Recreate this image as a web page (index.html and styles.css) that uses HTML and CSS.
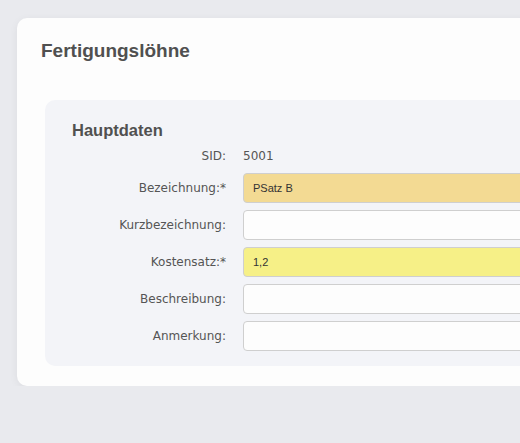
FILE: index.html
```html
<!DOCTYPE html>
<html lang="de">
  <head>
    <meta charset="UTF-8" />
    <title>Fertigungslöhne</title>
    <link rel="stylesheet" href="styles.css">
  </head>
  <body>
    <div class="card">
      <h1>Fertigungslöhne</h1>

      <div class="panel">
        <h2>Hauptdaten</h2>
        <div class="form">
          <label class="label">SID:</label>
          <div class="value">5001</div>

          <label class="label" for="bez">Bezeichnung:*</label>
          <input class="field field-required" id="bez" type="text" value="PSatz B" />

          <label class="label" for="kurz">Kurzbezeichnung:</label>
          <input class="field" id="kurz" type="text" value="" />

          <label class="label" for="kosten">Kostensatz:*</label>
          <input class="field field-changed" id="kosten" type="text" value="1,2" />

          <label class="label" for="beschr">Beschreibung:</label>
          <input class="field" id="beschr" type="text" value="" />

          <label class="label" for="anm">Anmerkung:</label>
          <input class="field" id="anm" type="text" value="" />
        </div>
      </div>
    </div>
  </body>
</html>
```

FILE: styles.css
```css
html, body {
    overflow: hidden;
}

body {
    margin: 0;
    background-color: #e9eaee;
    font-family: 'Liberation Sans', Arial, sans-serif;
}

.card {
    width: 720px;
    margin: 18px 0 0 17px;
    padding: 21px 0 20px 24px;
    background: #fdfdfd;
    border-radius: 10px;
    box-shadow: 0 2px 8px rgba(0, 0, 0, 0.06);
}

h1 {
    margin: 0 0 37px 0;
    font-size: 19px;
    line-height: 24px;
    font-weight: 700;
    color: #505050;
}

.panel {
    margin-left: 4px;
    padding: 20px 0 15px 27px;
    background: #f3f4f8;
    border-radius: 10px;
}

h2 {
    margin: 0 0 6px 0;
    font-size: 16.5px;
    line-height: 20px;
    font-weight: 700;
    color: #505050;
}

/* label column | input column */
.form {
    display: grid;
    grid-template-columns: 154px 1fr;
    column-gap: 17px;
    row-gap: 7px;
    align-items: center;
}

.label,
.value {
    font-family: 'DejaVu Sans', Verdana, sans-serif;
    font-size: 12px;
    line-height: 20px;
    color: #555;
}

.label {
    text-align: right;
}

.field {
    box-sizing: border-box;
    height: 30px;
    width: 100%;
    margin: 0;
    padding: 0 9px;
    font-family: 'Liberation Sans', Arial, sans-serif;
    font-size: 11px;
    color: #333;
    background: #fdfdfd;
    border: 1px solid #cfcfcf;
    border-radius: 4px;
    outline: none;
}

.field-required {
    background: #f3da93;
}

.field-changed {
    background: #f6f087;
}
```
